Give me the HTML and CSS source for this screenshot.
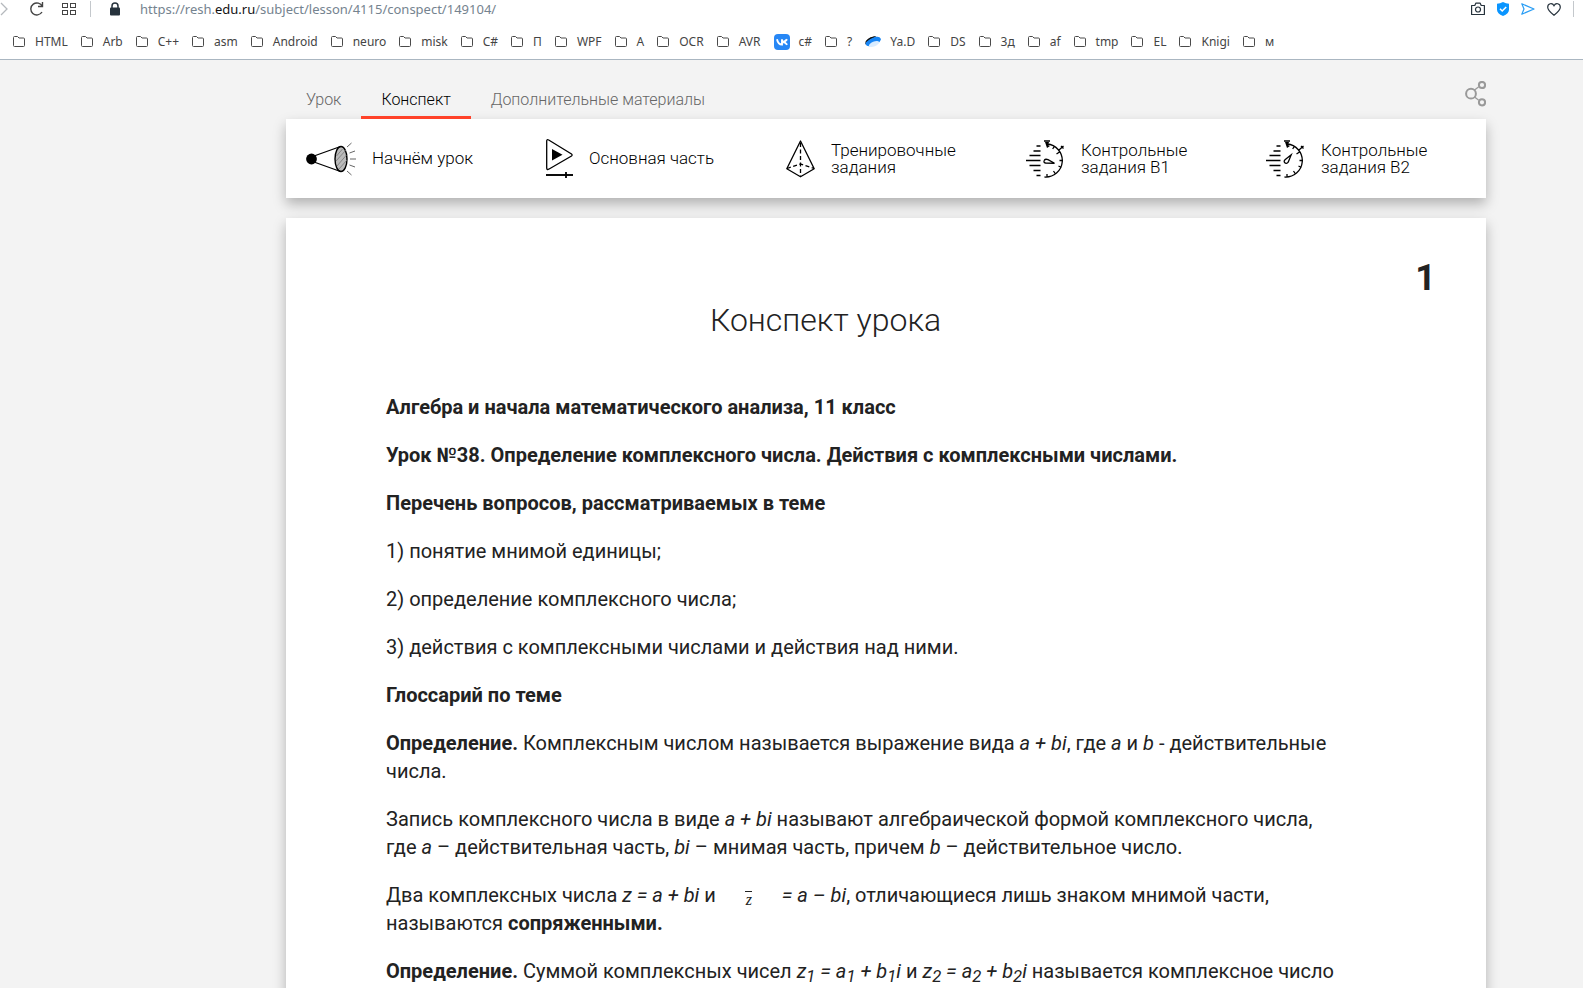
FILE: index.html
```html
<!DOCTYPE html>
<html lang="ru">
<head>
<meta charset="utf-8">
<title>Конспект урока</title>
<link rel="stylesheet" href="styles.css">
</head>
<body>
<svg class="defs" aria-hidden="true">
  <symbol id="folder" viewBox="0 0 12 11"><path d="M.5 1.5q0-1 1-1h3l1.5 1.500h4.500q1 0 1 1v6.500q0 1-1 1h-9q-1 0-1-1z" fill="none" stroke="#4a4a4a"/></symbol>
  <symbol id="timer" viewBox="0 0 38 38">
    <g fill="none" stroke="#000" stroke-width="1.300">
      <path d="M10.500 6h4M7.500 11h7M3.500 15.500h11M0 20.500h14.500M3.500 25.500h11M7.500 30.500h7M10.500 35.500h4"/>
      <path d="M21 4a16.500 16.500 0 0 1-2.500 33M28.500 6l-1.800 3M33.500 12l-3 2M37 20.500h-3.500M35.500 27.500l-3-1.500M29.500 34l-2-3M21 37v-3M18 1h6M33 10l4.500-4M35 6l2.500 2.500"/>
    </g>
    <path d="M19 2h4l-1 3 2 1-3 2z"/>
  </symbol>
</svg>

<header class="browser">
  <div class="toolbar">
    <button class="tool forward" aria-label="Вперёд"><svg width="8" height="16" viewBox="0 0 8 16"><path d="M1 2l6 6-6 6" fill="none" stroke="#b5b9bd" stroke-width="1.300"/></svg></button>
    <button class="tool reload" aria-label="Обновить"><svg width="14" height="14" viewBox="0 0 14 14"><path d="M12 10a6 6 0 1 1 .3-5.500M12.500 0v4.500H8" fill="none" stroke="#444" stroke-width="1.400"/></svg></button>
    <button class="tool tiles" aria-label="Экспресс-панель"><svg width="14" height="12" viewBox="0 0 14 12"><g fill="none" stroke="#444"><rect x=".5" y=".5" width="5" height="4"/><rect x="8.500" y=".5" width="5" height="4"/><rect x=".5" y="7.500" width="5" height="4"/><rect x="8.500" y="7.500" width="5" height="4"/></g></svg></button>
    <span class="divider"></span>
    <svg class="lock" width="10" height="14" viewBox="0 0 10 14"><rect y="5.500" width="10" height="8" rx="1" fill="#26323c"/><path d="M2 6V4a3 3 0 0 1 6 0v2" fill="none" stroke="#26323c" stroke-width="1.500"/></svg>
    <span class="url">https://resh.<b>edu.ru</b>/subject/lesson/4115/conspect/149104/</span>
    <div class="actions">
      <button class="tool" aria-label="Снимок"><svg width="14" height="14" viewBox="0 0 14 14"><path d="M.6 3.500h3.200l1-2.300h4.400l1 2.300h3.200v9H.6z" fill="none" stroke="#26323c" stroke-width="1.200" stroke-linejoin="round"/><circle cx="7" cy="7.500" r="2.500" fill="none" stroke="#26323c" stroke-width="1.200"/></svg></button>
      <button class="tool" aria-label="Защита"><svg width="12" height="14" viewBox="0 0 12 14"><path d="M6 0q3 1.800 6 1.800v6Q12 11.500 6 14 0 11.500 0 7.800v-6Q3 1.800 6 0z" fill="#0a95ff"/><path d="M3 6.800l2.200 2.200L9.200 5" fill="none" stroke="#fff" stroke-width="1.500"/></svg></button>
      <button class="tool" aria-label="Отправить"><svg width="14" height="12" viewBox="0 0 14 12"><path d="M.8.8L13 6 .8 11.200 3 6z" fill="none" stroke="#2a9df4" stroke-width="1.200" stroke-linejoin="round"/></svg></button>
      <button class="tool" aria-label="Избранное"><svg width="14" height="13" viewBox="0 0 14 13"><path d="M7 12.200C3.500 9.500.7 7.300.7 4.200.7.300 5.400-.5 7 2.700 8.600-.5 13.300.300 13.300 4.200c0 3.100-2.800 5.300-6.300 8z" fill="none" stroke="#26323c" stroke-width="1.200"/></svg></button>
      <span class="divider"></span>
    </div>
  </div>
  <nav class="bookmarks" aria-label="Закладки">
    <a href="#"><svg class="folder"><use href="#folder"/></svg>HTML</a>
    <a href="#"><svg class="folder"><use href="#folder"/></svg>Arb</a>
    <a href="#"><svg class="folder"><use href="#folder"/></svg>C++</a>
    <a href="#"><svg class="folder"><use href="#folder"/></svg>asm</a>
    <a href="#"><svg class="folder"><use href="#folder"/></svg>Android</a>
    <a href="#"><svg class="folder"><use href="#folder"/></svg>neuro</a>
    <a href="#"><svg class="folder"><use href="#folder"/></svg>misk</a>
    <a href="#"><svg class="folder"><use href="#folder"/></svg>C#</a>
    <a href="#"><svg class="folder"><use href="#folder"/></svg>П</a>
    <a href="#"><svg class="folder"><use href="#folder"/></svg>WPF</a>
    <a href="#"><svg class="folder"><use href="#folder"/></svg>A</a>
    <a href="#"><svg class="folder"><use href="#folder"/></svg>OCR</a>
    <a href="#"><svg class="folder"><use href="#folder"/></svg>AVR</a>
    <a class="site" href="#"><svg class="favicon" viewBox="0 0 16 16"><rect width="16" height="16" rx="4" fill="#2787f5"/><path d="M3 5.200c.7 3.300 2.300 5.300 5 5.300V5.200M13 5.200C12 7 10.500 7.800 8.200 7.900c2.300.1 3.800 1.200 5 2.800" fill="none" stroke="#fff" stroke-width="1.900"/></svg>c#</a>
    <a href="#"><svg class="folder"><use href="#folder"/></svg>?</a>
    <a class="site" href="#"><svg class="favicon" viewBox="0 0 16 16"><path d="M0 10.500C1 6 5 2.500 11 2.200L8 5z" fill="#111"/><ellipse cx="8.200" cy="7.500" rx="8" ry="3.900" transform="rotate(-22 8.200 7.500)" fill="#1684f3"/><ellipse cx="9" cy="10" rx="5.500" ry="2.400" transform="rotate(-22 9 10)" fill="#d9ecff"/><path d="M0 9C1 5.500 5 2.500 11.500 2.200 7 3.500 3 6 0 9z" fill="#111"/></svg>Ya.D</a>
    <a href="#"><svg class="folder"><use href="#folder"/></svg>DS</a>
    <a href="#"><svg class="folder"><use href="#folder"/></svg>3д</a>
    <a href="#"><svg class="folder"><use href="#folder"/></svg>af</a>
    <a href="#"><svg class="folder"><use href="#folder"/></svg>tmp</a>
    <a href="#"><svg class="folder"><use href="#folder"/></svg>EL</a>
    <a href="#"><svg class="folder"><use href="#folder"/></svg>Knigi</a>
    <a href="#"><svg class="folder"><use href="#folder"/></svg>м</a>
  </nav>
</header>

<main class="page">
  <div class="tabs-row">
    <nav class="tabs" aria-label="Разделы урока">
      <a href="#">Урок</a>
      <a class="active" href="#" aria-current="page">Конспект</a>
      <a href="#">Дополнительные материалы</a>
    </nav>
    <button class="tool share" aria-label="Поделиться"><svg width="21" height="26" viewBox="0 0 21 26"><g fill="none" stroke="#999"><path d="M9.500 9l4-3M9.500 16l4 3" stroke-width="1.300"/><circle cx="6" cy="12.700" r="4.900" stroke-width="2"/><circle cx="17" cy="4" r="3.100" stroke-width="2"/><circle cx="17" cy="21.300" r="3.100" stroke-width="2"/></g></svg></button>
  </div>

  <nav class="card steps" aria-label="Этапы урока">
    <a href="#">
      <svg width="50" height="34" viewBox="0 0 50 34">
        <ellipse cx="35" cy="17" rx="6" ry="12.500" fill="#bbb" stroke="#000" stroke-width="1.400"/>
        <path d="M30.500 14l6-7M30 19l10-11M31 24l9.500-11M33 27l8-9" stroke="#777" stroke-width=".8"/>
        <path d="M8 14L34.500 4.500M8 20l26.500 9.500" fill="none" stroke="#000" stroke-width="1.300"/>
        <circle cx="5.500" cy="17" r="5.400"/>
        <path d="M41 5l4.500-4M43.500 11l5.500-2M44 17h6M43.500 23l5.500 2M41 29l4.500 4" stroke="#555" stroke-width=".9"/>
      </svg>
      <span>Начнём урок</span>
    </a>
    <a href="#">
      <svg width="27" height="39" viewBox="0 0 27 39">
        <path d="M.7 2v27q0 2.200 2 1.200L25.500 17q1.200-1 0-2L2.700 1Q.7 0 .7 2z" fill="none" stroke="#000" stroke-width="1.300"/>
        <path d="M6 10v11.500l10.500-5.700z"/>
        <path d="M0 36h27" stroke="#000" stroke-width="1.900"/><path d="M20 33v6" stroke="#000" stroke-width="1.800"/>
      </svg>
      <span>Основная часть</span>
    </a>
    <a href="#">
      <svg width="29" height="38" viewBox="0 0 29 38">
        <path d="M14.500 1L.8 28.800l13.700 8 13.700-8z" fill="none" stroke="#000" stroke-width="1.300" stroke-linejoin="round"/>
        <path d="M14.500 3v33M1 28.500l13.500-4.500L28 28.500" fill="none" stroke="#000" stroke-width="1.300" stroke-dasharray="4 2.500"/>
      </svg>
      <span>Тренировочные задания</span>
    </a>
    <a href="#">
      <svg width="39" height="38" viewBox="0 0 39 38"><use href="#timer" width="38" height="38"/><path d="M18.500 20q-1.500 2.500 1 3l9 .3-6.500-3.600q-2.500-1-3.500.3z" fill="none" stroke="#000" stroke-width="1.300"/></svg>
      <span>Контрольные задания В1</span>
    </a>
    <a href="#">
      <svg width="39" height="38" viewBox="0 0 39 38"><use href="#timer" width="38" height="38"/><path d="M18.500 22.500q2 2 3.700-.3l3-7.500-6.200 5q-1.500 1.500-.5 2.800z" fill="none" stroke="#000" stroke-width="1.300"/></svg>
      <span>Контрольные задания В2</span>
    </a>
  </nav>

  <article class="card lesson">
    <div class="number">1</div>
    <h1>Конспект урока</h1>
    <div class="text">
      <p><b>Алгебра и начала математического анализа, 11 класс</b></p>
      <p><b>Урок №38. Определение комплексного числа. Действия с комплексными числами.</b></p>
      <p><b>Перечень вопросов, рассматриваемых в теме</b></p>
      <p>1) понятие мнимой единицы;</p>
      <p>2) определение комплексного числа;</p>
      <p>3) действия с комплексными числами и действия над ними.</p>
      <p><b>Глоссарий по теме</b></p>
      <p><b>Определение.</b> Комплексным числом называется выражение вида <i>a + bi</i>, где <i>a</i> и <i>b</i> - действительные числа.</p>
      <p>Запись комплексного числа в виде <i>a + bi</i> называют алгебраической формой комплексного числа, где <i>a</i> – действительная часть, <i>bi</i> – мнимая часть, причем <i>b</i> – действительное число.</p>
      <p>Два комплексных числа <i>z = a + bi</i> и <span class="conjugate">z</span> <i>= a – bi</i>, отличающиеся лишь знаком мнимой части, называются <b>сопряженными.</b></p>
      <p><b>Определение.</b> Суммой комплексных чисел <i>z<sub>1</sub> = a<sub>1</sub> + b<sub>1</sub>i</i> и <i>z<sub>2</sub> = a<sub>2</sub> + b<sub>2</sub>i</i> называется комплексное число</p>
    </div>
  </article>
</main>
</body>
</html>
```
FILE: styles.css
```css
* { box-sizing: border-box; }

body {
  margin: 0;
  height: 100vh;
  overflow: hidden;
  background: #f3f3f3;
  color: #222;
  font-family: Roboto, "Liberation Sans", sans-serif;
}

a { color: inherit; text-decoration: none; }
svg { display: block; flex: none; }
.defs { display: none; }

.tool {
  display: flex;
  padding: 0;
  border: 0;
  background: none;
}

/* Browser chrome */
.browser {
  background: #fff;
  border-bottom: 1px solid #aab6c1;
  font-family: "Noto Sans", sans-serif;
}

.toolbar {
  display: flex;
  align-items: center;
  height: 18px;
}
.reload { margin-left: 22px; }
.tiles { margin-left: 18px; }
.divider {
  width: 1px;
  height: 16px;
  background: #c4c8cc;
}
.toolbar > .divider { margin-left: 14px; }
.lock { margin-left: 19px; }
.url {
  margin-left: 20px;
  font-size: 13px;
  line-height: 18px;
  color: #75838f;
}
.url b { font-weight: 400; color: #111; }
.actions {
  display: flex;
  align-items: center;
  gap: 12px;
  margin-left: auto;
  padding-right: 9px;
}

.bookmarks {
  display: flex;
  gap: 13px;
  padding: 6px 13px 0;
  height: 41px;
  font-size: 12px;
  color: #444;
  white-space: nowrap;
}
.bookmarks a {
  display: flex;
  align-items: center;
  gap: 10px;
}
.bookmarks .site { gap: 9px; }
.folder { width: 12px; height: 11px; }
.favicon { width: 16px; height: 16px; }

/* Lesson page */
.page { padding: 0 97px 0 286px; }

.tabs-row {
  display: flex;
  justify-content: space-between;
  align-items: flex-end;
  height: 59px;
}
.tabs {
  display: flex;
  font-size: 16px;
  font-weight: 300;
  color: #666;
}
.tabs a {
  padding: 0 20px 4px;
  line-height: 24px;
  border-bottom: 3px solid transparent;
}
.tabs .active {
  color: #000;
  border-color: #ff4229;
}
.share { margin-bottom: 12px; }

.card {
  background: #fff;
  box-shadow: 0 6px 12px rgba(0, 0, 0, .27);
}

.steps {
  display: grid;
  grid-template-columns: repeat(5, 1fr);
  height: 79px;
  font-size: 17px;
  font-weight: 300;
  line-height: 17px;
  color: #000;
}
.steps a {
  display: flex;
  align-items: center;
  gap: 16px;
  padding: 0 20px;
}

.lesson {
  margin-top: 20px;
  padding: 39px 50px 60px 100px;
}
.number {
  font-size: 36px;
  font-weight: 700;
  line-height: 42px;
  text-align: right;
}
h1 {
  margin: 0 171px 52px 0;
  font-size: 32px;
  font-weight: 300;
  line-height: 42px;
  text-align: center;
}
.text {
  margin-right: 90px;
  font-size: 20px;
  line-height: 28px;
}
.text p { margin: 0 0 20px; }
.text sub { line-height: 0; vertical-align: -4px; }
.conjugate {
  display: inline-block;
  width: 56px;
  font: italic 16px/16px "Liberation Serif", serif;
  text-align: center;
  vertical-align: -3px;
}
.conjugate::before {
  content: "";
  display: block;
  width: 7px;
  height: 1px;
  margin: 0 auto;
  background: #222;
}
```
